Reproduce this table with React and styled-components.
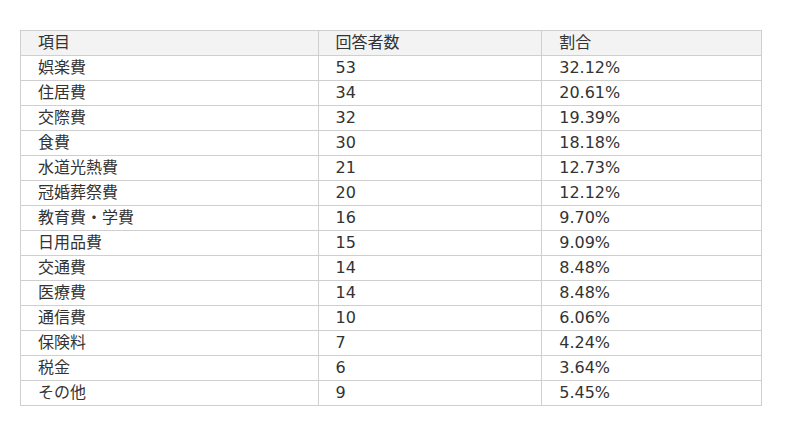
import React from "react";
import styled, { createGlobalStyle } from "styled-components";

const Global = createGlobalStyle`
  html, body { margin: 0; padding: 0; background: #fff; }
  body { font-family: "DejaVu Sans", "Noto Sans CJK JP", sans-serif; }
`;

const Page = styled.div`
  padding: 30px 0 0 20px;
`;

const Table = styled.table`
  width: 742px;
  border-collapse: collapse;
  font-size: 16px;
  color: #333;
  font-family: "DejaVu Sans", "Noto Sans CJK JP", sans-serif;
`;

const Th = styled.th`
  background: #f3f3f3;
  font-weight: normal;
  text-align: left;
  border: 1px solid #cfcfcf;
  height: 24px;
  padding: 0 0 0 17px;
  line-height: 24px;
  width: ${(p) => p.$w};
  box-sizing: border-box;
`;

const Td = styled.td`
  border: 1px solid #cfcfcf;
  height: 24px;
  padding: 0 0 0 17px;
  line-height: 24px;
  box-sizing: border-box;
`;

const rows = [
  ["娯楽費", "53", "32.12%"],
  ["住居費", "34", "20.61%"],
  ["交際費", "32", "19.39%"],
  ["食費", "30", "18.18%"],
  ["水道光熱費", "21", "12.73%"],
  ["冠婚葬祭費", "20", "12.12%"],
  ["教育費・学費", "16", "9.70%"],
  ["日用品費", "15", "9.09%"],
  ["交通費", "14", "8.48%"],
  ["医療費", "14", "8.48%"],
  ["通信費", "10", "6.06%"],
  ["保険料", "7", "4.24%"],
  ["税金", "6", "3.64%"],
  ["その他", "9", "5.45%"],
];

export default function App() {
  return (
    <Page>
      <Global />
      <Table>
        <thead>
          <tr>
            <Th $w="298px">項目</Th>
            <Th $w="224px">回答者数</Th>
            <Th $w="220px">割合</Th>
          </tr>
        </thead>
        <tbody>
          {rows.map((r) => (
            <tr key={r[0]}>
              <Td>{r[0]}</Td>
              <Td>{r[1]}</Td>
              <Td>{r[2]}</Td>
            </tr>
          ))}
        </tbody>
      </Table>
    </Page>
  );
}
